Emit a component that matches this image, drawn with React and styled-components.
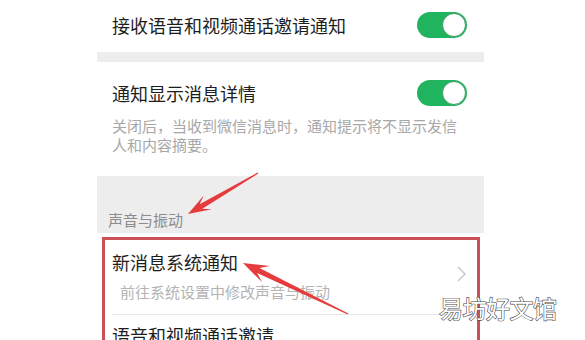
import React from 'react';
import styled, {createGlobalStyle} from 'styled-components';

const GlobalStyle = createGlobalStyle`
    body {
        margin: 0;
        background: #ffffff;
        font-family: "Noto Sans CJK SC", "Noto Sans", sans-serif;
    }
`;

const Page = styled.div`
    position: relative;
    width: 585px;
    height: 340px;
    overflow: hidden;
    background: #ffffff;
`;

const Panel = styled.div`
    width: 387px;
    margin-left: 97px;
    background: #ffffff;
`;

const SwitchRow = styled.div`
    display: flex;
    align-items: center;
    justify-content: space-between;
    height: 52px;
    padding: 0 17px 3px 15px;
    box-sizing: border-box;
`;

const Title = styled.div`
    font-size: 18px;
    line-height: 26px;
    color: #1e1e1e;
`;

const Band = styled.div`
    height: 10px;
    background: #ededed;
`;

const DetailBlock = styled.div`
    padding: 18px 0 22px 15px;
`;

const DetailHead = styled.div`
    display: flex;
    align-items: center;
    justify-content: space-between;
    padding-right: 17px;
`;

const Description = styled.div`
    max-width: 352px;
    margin-top: 10px;
    font-size: 15px;
    line-height: 19px;
    color: #a8a8a8;
`;

const SectionHeader = styled.div`
    display: flex;
    align-items: flex-end;
    height: 57px;
    padding: 0 0 3px 11px;
    box-sizing: border-box;
    background: #ededed;
    font-size: 15px;
    line-height: 20px;
    color: #8c8c8c;
`;

const Group = styled.div`
    padding: 4px 4px 0 5px;
`;

const Highlight = styled.div`
    border: 3px solid #cb5058;
    border-bottom: none;
    height: 120px;
    overflow: hidden;
`;

const LinkItem = styled.div`
    position: relative;
    padding: ${p => p.$first ? '9px' : '7px'} 0 12px 7px;
`;

const ItemBody = styled.div`
    border-bottom: ${p => p.$divider ? '1px solid #e6e6e6' : 'none'};
    padding-bottom: ${p => p.$divider ? '12px' : '0'};
    margin-bottom: ${p => p.$divider ? '-12px' : '0'};
`;

const Sub = styled.div`
    margin-top: 7px;
    padding-left: 8px;
    font-size: 15px;
    line-height: 20px;
    color: #b4b4b4;
`;

const Chevron = styled.svg`
    position: absolute;
    right: 11px;
    top: 26px;
`;

const Track = styled.div`
    display: flex;
    justify-content: flex-end;
    align-items: center;
    width: 50px;
    height: 26px;
    padding: 1px;
    box-sizing: border-box;
    border-radius: 13px;
    background: #1fb45d;
`;

const Knob = styled.div`
    width: 24px;
    height: 24px;
    box-sizing: border-box;
    border-radius: 50%;
    border: 1.5px solid #3f9a63;
    background: #ffffff;
`;

const Overlay = styled.svg`
    position: absolute;
    left: 0;
    top: 0;
    pointer-events: none;
`;

const Watermark = styled.div`
    position: absolute;
    left: 439px;
    top: 293px;
    font-size: 24px;
    line-height: 30px;
    color: #ffffff;
    -webkit-text-stroke: 1.2px #4a4a4a;
    paint-order: stroke fill;
    letter-spacing: -0.5px;
`;

function Toggle() {
    return (
        <Track>
            <Knob/>
        </Track>
    );
}

// tapered annotation arrow, thin at the tail and wide at the head
function arrowPoints([tx, ty], [hx, hy], headLen, headHalf, shaftHalf) {
    const dx = hx - tx, dy = hy - ty;
    const len = Math.hypot(dx, dy);
    const ux = dx / len, uy = dy / len;
    const nx = -uy, ny = ux;
    const bx = hx - ux * headLen, by = hy - uy * headLen;
    const back = headLen * 0.35;
    const pts = [
        [tx + nx * 0.6, ty + ny * 0.6],
        [bx + nx * shaftHalf + ux * 2, by + ny * shaftHalf + uy * 2],
        [bx + nx * headHalf - ux * back, by + ny * headHalf - uy * back],
        [hx, hy],
        [bx - nx * headHalf - ux * back, by - ny * headHalf - uy * back],
        [bx - nx * shaftHalf + ux * 2, by - ny * shaftHalf + uy * 2],
        [tx - nx * 0.6, ty - ny * 0.6],
    ];
    return pts.map(p => p.map(v => v.toFixed(1)).join(',')).join(' ');
}

export default function App() {
    return (
        <>
            <GlobalStyle/>
            <Page>
                <Panel>
                    <SwitchRow>
                        <Title>接收语音和视频通话邀请通知</Title>
                        <Toggle/>
                    </SwitchRow>
                    <Band/>
                    <DetailBlock>
                        <DetailHead>
                            <Title>通知显示消息详情</Title>
                            <Toggle/>
                        </DetailHead>
                        <Description>关闭后，当收到微信消息时，通知提示将不显示发信人和内容摘要。</Description>
                    </DetailBlock>
                    <SectionHeader>声音与振动</SectionHeader>
                    <Group>
                        <Highlight>
                            <LinkItem $first>
                                <ItemBody $divider>
                                    <Title>新消息系统通知</Title>
                                    <Sub>前往系统设置中修改声音与振动</Sub>
                                </ItemBody>
                                <Chevron width="9" height="16" viewBox="0 0 9 16">
                                    <polyline points="1,1 8,8 1,15" fill="none" stroke="#c4c4c4" strokeWidth="1.4"/>
                                </Chevron>
                            </LinkItem>
                            <LinkItem>
                                <ItemBody>
                                    <Title>语音和视频通话邀请</Title>
                                </ItemBody>
                            </LinkItem>
                        </Highlight>
                    </Group>
                </Panel>
                <Overlay width="585" height="340" viewBox="0 0 585 340">
                    <polygon points={arrowPoints([258, 173], [188, 214], 17, 8, 2.6)} fill="#e53b3d"/>
                    <polygon points={arrowPoints([348, 314], [243, 263], 19, 9, 2.8)} fill="#e53b3d"/>
                </Overlay>
                <Watermark>易坊好文馆</Watermark>
            </Page>
        </>
    );
}
